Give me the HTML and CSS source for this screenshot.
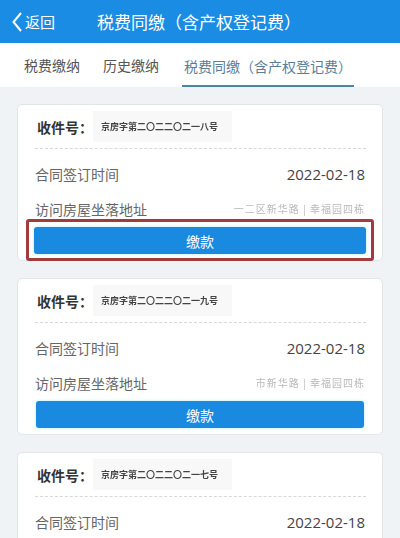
FILE: index.html
```html
<html>
    <head>
        <meta charset="utf-8">
        <link rel="stylesheet" href="styles.css">
    </head>
    <body>
        <div class="topbar">
            <div class="back">
                <svg class="back-icon" width="12" height="20" viewBox="0 0 12 20">
                    <polyline points="10,1 2.5,10 10,19" fill="none" stroke="#fff" stroke-width="2"/>
                </svg>
                <span>返回</span>
            </div>
            <div class="title">税费同缴（含产权登记费）</div>
        </div>

        <div class="tabs">
            <div class="tab">税费缴纳</div>
            <div class="tab">历史缴纳</div>
            <div class="tab active">税费同缴（含产权登记费）</div>
        </div>

        <div class="list">
            <div class="card">
                <div class="card-head">
                    <span class="label">收件号：</span>
                    <span class="masked">京房字第二〇二二〇二一八号</span>
                </div>
                <div class="row">
                    <span>合同签订时间</span>
                    <span class="value">2022-02-18</span>
                </div>
                <div class="row">
                    <span>访问房屋坐落地址</span>
                    <span class="masked-light">一二区新华路 | 幸福园四栋</span>
                </div>
                <div class="mark">
                    <button class="pay">缴款</button>
                </div>
            </div>

            <div class="card">
                <div class="card-head">
                    <span class="label">收件号：</span>
                    <span class="masked">京房字第二〇二二〇二一九号</span>
                </div>
                <div class="row">
                    <span>合同签订时间</span>
                    <span class="value">2022-02-18</span>
                </div>
                <div class="row">
                    <span>访问房屋坐落地址</span>
                    <span class="masked-light">市新华路 | 幸福园四栋</span>
                </div>
                <button class="pay">缴款</button>
            </div>

            <div class="card">
                <div class="card-head">
                    <span class="label">收件号：</span>
                    <span class="masked">京房字第二〇二二〇二一七号</span>
                </div>
                <div class="row">
                    <span>合同签订时间</span>
                    <span class="value">2022-02-18</span>
                </div>
                <div class="row">
                    <span>访问房屋坐落地址</span>
                    <span class="masked-light">市新华路 | 幸福园四栋</span>
                </div>
                <button class="pay">缴款</button>
            </div>
        </div>
    </body>
</html>
```

FILE: styles.css
```css
body {
    margin: 0;
    background: #f0f3f6;
    font-family: "Noto Sans CJK SC", "Noto Sans", sans-serif;
    overflow: hidden;
}

.topbar {
    height: 43px;
    background: #1b8ce3;
    color: #fff;
    display: flex;
    align-items: center;
}

.back {
    display: flex;
    align-items: center;
    padding-left: 11px;
    width: 86px;
    font-size: 15px;
}

.back-icon {
    margin-right: 2px;
}

.title {
    font-size: 17px;
}

.tabs {
    height: 44px;
    background: #fff;
    display: flex;
    padding-left: 24px;
    gap: 23px;
}

.tab {
    font-size: 14px;
    color: #555;
    line-height: 44px;
    box-sizing: border-box;
}

.tab.active {
    color: #5a7e98;
    border-bottom: 2px solid #4a86a8;
    line-height: 42px;
    padding: 2px 2px 0;
}

.list {
    padding: 17px 17px 0;
    display: flex;
    flex-direction: column;
    gap: 17px;
}

.card {
    background: #fff;
    border: 1px solid #e2e6ea;
    border-radius: 5px;
    padding: 0 17px 6px;
    display: flex;
    flex-direction: column;
}

.card-head {
    height: 43px;
    display: flex;
    align-items: center;
    padding-left: 2px;
    border-bottom: 1px dashed #d6d9dc;
    margin-right: -1px;
}

.label {
    font-size: 14px;
    font-weight: bold;
    color: #333;
}

.masked {
    background: #f8f8f8;
    padding: 9px 14px 9px 8px;
    font-size: 9px;
    font-weight: bold;
    color: #444;
    filter: blur(0.4px);
}

.row {
    height: 35px;
    display: flex;
    justify-content: space-between;
    align-items: center;
    font-size: 14px;
    color: #666;
}

.card-head + .row {
    margin-top: 7px;
}

.value {
    font-family: "Open Sans", "Noto Sans", sans-serif;
    font-size: 15px;
    color: #444;
}

.masked-light {
    font-size: 10px;
    color: #b8b8b8;
    letter-spacing: 1px;
    filter: blur(0.4px);
}

.pay {
    margin: 1px 1px 0;
    height: 27px;
    border: none;
    border-radius: 3px;
    background: #1a8ae0;
    color: #fff;
    font-family: "Noto Sans CJK SC", sans-serif;
    font-size: 14px;
    box-shadow: 0 0 3px rgba(120, 220, 240, 0.6);
}

.mark {
    display: flex;
    flex-direction: column;
    margin: -7px -9px -7px -9px;
    padding: 5px 5px 4px;
    border: 3px solid #a23b3b;
    border-radius: 3px;
}

.mark .pay {
    margin: 0;
}
```
